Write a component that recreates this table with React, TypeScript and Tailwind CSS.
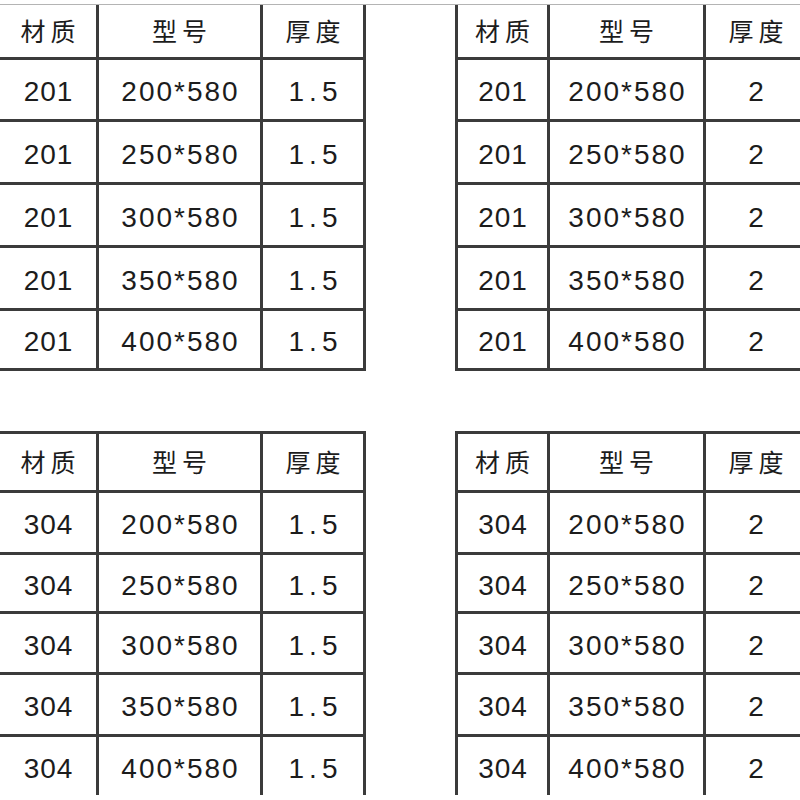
const topRows = ["200*580", "250*580", "300*580", "350*580", "400*580"]

type Spec = {
  cols: string
  rows: string
  material: string
  thick: string
  top: boolean
  className: string
}

const headCls =
  "flex items-center justify-center bg-white pl-[5px] text-[25px] tracking-[5px] text-[#1c1c1c] [font-family:'Noto_Sans_CJK_SC','Noto_Sans',sans-serif]"
const cellCls =
  "flex items-center justify-center bg-white pt-[5px] text-[28px] text-[#1c1c1c] [font-family:'Liberation_Sans',Arial,sans-serif]"

function SpecTable({ cols, rows, material, thick, top, className }: Spec) {
  return (
    <div
      className={`grid gap-[3px] bg-[#3b3b3b] px-[3px] ${top ? "pt-0 pb-[3px]" : "pt-[3px] pb-0"} ${className}`}
      style={{ gridTemplateColumns: cols, gridTemplateRows: rows }}
    >
      <div className={headCls}>材质</div>
      <div className={headCls}>型号</div>
      <div className={headCls}>厚度</div>
      {topRows.map((size) => (
        <div key={size} className="contents">
          <div className={`${cellCls} tracking-[1px] pl-[1px]`}>{material}</div>
          <div className={`${cellCls} tracking-[2px] pl-[2px]`}>{size}</div>
          <div className={`${cellCls} ${thick === "1.5" ? "tracking-[5px] pl-[5px]" : ""}`}>{thick}</div>
        </div>
      ))}
    </div>
  )
}

export default function App() {
  const leftCols = "96px 161px 100px"
  const rightCols = "89px 153px 100px"
  const topRowsH = "52px 59px 60px 60px 60px 57px"
  const bottomRowsH = "56px 59px 56px 58px 59px 58px"

  return (
    <div className="relative h-[800px] w-[800px] overflow-hidden bg-white pt-[4px]">
      <div className="h-px w-full bg-[#b4b4b4]" />
      <div className="flex gap-[89px]">
        <SpecTable cols={leftCols} rows={topRowsH} material="201" thick="1.5" top className="ml-[-3px]" />
        <SpecTable cols={rightCols} rows={topRowsH} material="201" thick="2" top className="" />
      </div>
      <div className="mt-[60px] flex gap-[89px]">
        <SpecTable cols={leftCols} rows={bottomRowsH} material="304" thick="1.5" top={false} className="ml-[-3px]" />
        <SpecTable cols={rightCols} rows={bottomRowsH} material="304" thick="2" top={false} className="" />
      </div>
    </div>
  )
}
